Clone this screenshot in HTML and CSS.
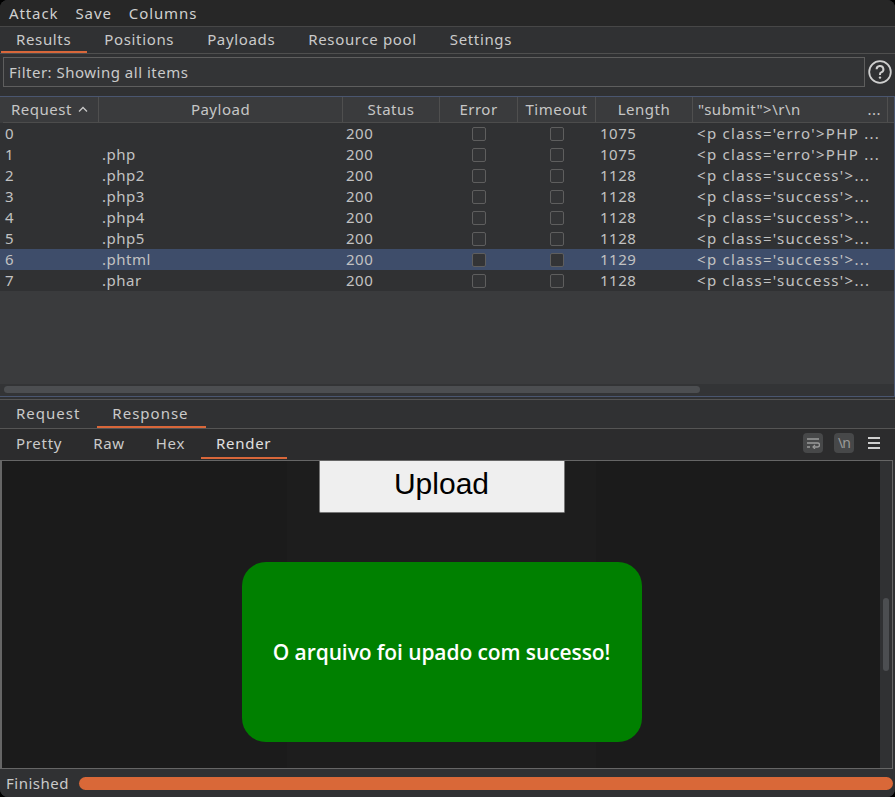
FILE: index.html
```html
<!DOCTYPE html>
<html>
<head>
<meta charset="utf-8">
<link rel="stylesheet" href="styles.css">
</head>
<body>
<div class="window">
  <div class="menubar">
    <span class="menu">Attack</span>
    <span class="menu">Save</span>
    <span class="menu">Columns</span>
  </div>
  <div class="tabs">
    <span class="tab active">Results</span>
    <span class="tab">Positions</span>
    <span class="tab">Payloads</span>
    <span class="tab">Resource pool</span>
    <span class="tab">Settings</span>
  </div>
  <div class="filterrow">
    <div class="filter">Filter: Showing all items</div>
    <svg class="help" width="24" height="24" viewBox="0 0 24 24"><circle cx="12" cy="12" r="10.8" stroke="#cfcfcf" stroke-width="1.8" fill="none"/><path d="M8.6 9.3a3.4 3.3 0 1 1 4.6 3.1c-.9.4-1.2.9-1.2 1.8v.8" stroke="#cfcfcf" stroke-width="2" fill="none"/><circle cx="12" cy="17.6" r="1.2" fill="#cfcfcf"/></svg>
  </div>
  <div class="tablepanel">
    <div class="thead">
      <div class="th c1">Request <svg class="caret" width="10" height="6" viewBox="0 0 10 6"><path d="M1 5.5l4-4 4 4" stroke="#c8c8c8" stroke-width="1.3" fill="none"/></svg></div>
      <div class="th c2">Payload</div>
      <div class="th c3">Status</div>
      <div class="th c4">Error</div>
      <div class="th c5">Timeout</div>
      <div class="th c6">Length</div>
      <div class="th c7 left"><span>"submit"&gt;\r\n</span><span class="dots">...</span></div>
    </div>
    <div class="tbody">
      <div class="tr"><div class="td c1">0</div><div class="td c2"></div><div class="td c3">200</div><div class="td c4"><i class="cb"></i></div><div class="td c5"><i class="cb"></i></div><div class="td c6">1075</div><div class="td c7">&lt;p class='erro'&gt;PHP ...</div></div>
      <div class="tr"><div class="td c1">1</div><div class="td c2">.php</div><div class="td c3">200</div><div class="td c4"><i class="cb"></i></div><div class="td c5"><i class="cb"></i></div><div class="td c6">1075</div><div class="td c7">&lt;p class='erro'&gt;PHP ...</div></div>
      <div class="tr"><div class="td c1">2</div><div class="td c2">.php2</div><div class="td c3">200</div><div class="td c4"><i class="cb"></i></div><div class="td c5"><i class="cb"></i></div><div class="td c6">1128</div><div class="td c7">&lt;p class='success'&gt;...</div></div>
      <div class="tr"><div class="td c1">3</div><div class="td c2">.php3</div><div class="td c3">200</div><div class="td c4"><i class="cb"></i></div><div class="td c5"><i class="cb"></i></div><div class="td c6">1128</div><div class="td c7">&lt;p class='success'&gt;...</div></div>
      <div class="tr"><div class="td c1">4</div><div class="td c2">.php4</div><div class="td c3">200</div><div class="td c4"><i class="cb"></i></div><div class="td c5"><i class="cb"></i></div><div class="td c6">1128</div><div class="td c7">&lt;p class='success'&gt;...</div></div>
      <div class="tr"><div class="td c1">5</div><div class="td c2">.php5</div><div class="td c3">200</div><div class="td c4"><i class="cb"></i></div><div class="td c5"><i class="cb"></i></div><div class="td c6">1128</div><div class="td c7">&lt;p class='success'&gt;...</div></div>
      <div class="tr sel"><div class="td c1">6</div><div class="td c2">.phtml</div><div class="td c3">200</div><div class="td c4"><i class="cb"></i></div><div class="td c5"><i class="cb"></i></div><div class="td c6">1129</div><div class="td c7">&lt;p class='success'&gt;...</div></div>
      <div class="tr"><div class="td c1">7</div><div class="td c2">.phar</div><div class="td c3">200</div><div class="td c4"><i class="cb"></i></div><div class="td c5"><i class="cb"></i></div><div class="td c6">1128</div><div class="td c7">&lt;p class='success'&gt;...</div></div>
    </div>
    <div class="hscroll"><div class="hthumb"></div></div>
  </div>
  <div class="rrtabs">
    <span class="tab2">Request</span>
    <span class="tab2 active">Response</span>
  </div>
  <div class="viewtabs">
    <span class="tab3">Pretty</span>
    <span class="tab3">Raw</span>
    <span class="tab3">Hex</span>
    <span class="tab3 active">Render</span>
    <div class="tools">
      <span class="tbtn"><svg width="14" height="12" viewBox="0 0 14 12"><path d="M1 2h12M1 6h10.5a2 2 0 0 1 0 4H8M1 10h3" stroke="#9a9a9a" stroke-width="1.4" fill="none"/><path d="M9 8l-2 2 2 2" stroke="#9a9a9a" stroke-width="1.2" fill="none"/></svg></span>
      <span class="tbtn nl">\n</span>
      <span class="burger"><i></i><i></i><i></i></span>
    </div>
  </div>
  <div class="render">
    <div class="page">
      <div class="center">
        <div class="upload">Upload</div>
        <div class="msg">O arquivo foi upado com sucesso!</div>
      </div>
    </div>
    <div class="vscroll"><div class="vthumb"></div></div>
  </div>
  <div class="status">
    <span class="fin">Finished</span>
    <div class="progress"></div>
  </div>
</div>
</body>
</html>
```
FILE: styles.css
```css
* { box-sizing: border-box; }
html, body { margin: 0; padding: 0; background: #000; }
body { font-family: "Noto Sans", "Open Sans", sans-serif; font-size: 15px; color: #cacaca; letter-spacing: 0.5px; }
.window {
  width: 895px; height: 797px; background: #303133;
  border-radius: 8px; overflow: hidden;
  display: flex; flex-direction: column;
}
.menubar {
  height: 27px; background: #272727; border-bottom: 1px solid #474747;
  display: flex; align-items: center; padding-left: 9px;
}
.menu { margin-right: 17px; line-height: 26px; color: #d0d0d0; letter-spacing: 0.9px; }
.tabs {
  height: 27px; background: #303133; border-bottom: 1px solid #4f4f4f;
  display: flex; padding-left: 1px;
}
.tab { padding: 0 16px 0 15px; line-height: 24px; height: 26px; border-bottom: 2px solid transparent; letter-spacing: 0.65px; }
.tab + .tab { padding-left: 17px; }
.tab.active { border-bottom-color: #d9673a; }
.filterrow {
  height: 42px; display: flex; align-items: flex-start; padding: 3px 3px 0 3px; gap: 3px;
}
.filter {
  width: 862px; height: 30px; border: 1px solid #5e5e5e; background: #333436;
  padding-left: 5px; line-height: 28px;
}
.help { margin-top: 3px; flex: none; }
.tablepanel {
  height: 301px; border-top: 1px solid #4a5670; border-bottom: 1px solid #4a5670; border-right: 1px solid #4a5670;
  background: #3a3b3d; display: flex; flex-direction: column; padding-left: 3px;
}
.thead { display: flex; height: 26px; background: #3a3b3d; border-bottom: 1px solid #4c4c4c; flex: none; }
.th { border-right: 1px solid #4f4f4f; text-align: center; line-height: 25px; color: #c6c6c6; white-space: nowrap; }
.th.left { text-align: left; display: flex; justify-content: space-between; padding-left: 5px; padding-right: 6px; }
.th.c1 { text-align: left; padding-left: 8px; }
.caret { display: inline-block; vertical-align: 3px; margin-left: 2px; }
.c1 { width: 96px; }
.c2 { width: 244px; }
.c3 { width: 97px; }
.c4 { width: 78px; }
.c5 { width: 78px; }
.c6 { width: 97px; }
.c7 { width: 195px; }
.tbody { background: #3a3b3d; }
.tr { display: flex; height: 21px; background: #303133; margin-left: -3px; padding-left: 3px; }
.tr.sel { background: #3e4d6a; }
.td { line-height: 21px; color: #c2c2c2; white-space: nowrap; overflow: hidden; }
.td.c1 { padding-left: 2px; }
.td.c2 { padding-left: 3px; }
.td.c3 { padding-left: 3px; }
.td.c4, .td.c5 { display: flex; align-items: center; justify-content: center; }
.td.c6 { padding-left: 4px; }
.td.c7 { padding-left: 4px; letter-spacing: 1.3px; }
.cb { display: block; width: 14px; height: 14px; border: 1px solid #5e5e5e; border-radius: 2px; background: #333436; }
.hscroll { margin-top: auto; height: 12px; background: #333436; padding: 2px 4px; margin-left: -3px; }
.hthumb { width: 696px; height: 7px; background: #4c4e51; border-radius: 4px; }
.rrtabs {
  height: 30px; margin-top: 2px; border-top: 1px solid #555; border-bottom: 1px solid #555;
  background: #303133; display: flex; padding-left: 1px; flex: none;
}
.tab2 { padding: 0 17px 0 15px; line-height: 26px; height: 28px; border-bottom: 2px solid transparent; letter-spacing: 1px; }
.tab2.active { border-bottom-color: #d9673a; }
.viewtabs {
  height: 31px; background: #2c2c2d; display: flex; padding-left: 1px; align-items: stretch; flex: none;
}
.tab3 { padding: 0 16px 0 15px; line-height: 29px; height: 30px; border-bottom: 2px solid transparent; letter-spacing: 0.7px; }
.tab3.active { border-bottom-color: #d9673a; color: #e0e0e0; }
.tools { margin-left: auto; display: flex; align-items: center; gap: 11px; padding-right: 15px; padding-bottom: 4px; letter-spacing: 0; }
.tbtn {
  width: 20px; height: 20px; border-radius: 4px; background: #474849;
  display: flex; align-items: center; justify-content: center; color: #9a9a9a; font-size: 13px;
}
.tbtn.nl { font-size: 14px; letter-spacing: -1px; }
.burger { width: 12px; display: flex; flex-direction: column; gap: 3px; margin-left: 3px; }
.burger i { display: block; height: 2px; background: #cfcfcf; }
.render {
  height: 309px; border: 1px solid #666; border-left-width: 2px; background: #1b1b1b;
  display: flex; margin: 0 2px 0 0; flex: none;
}
.page { flex: 1; display: flex; justify-content: center; }
.center { width: 309px; background: #1d1d1d; display: flex; flex-direction: column; align-items: center; margin-left: 1px; }
.upload {
  width: 246px; height: 52px; background: #efefef; border: 1px solid #767676; border-top: none;
  font-family: "Liberation Sans", Arial, sans-serif; font-size: 30px; color: #000; letter-spacing: 0;
  text-align: center; line-height: 46px; border-radius: 0 0 2px 2px; flex: none;
}
.msg {
  margin-top: 49px; width: 400px; height: 180px; background: #008000; border-radius: 24px;
  color: #fff; font-family: "Open Sans", "Noto Sans", sans-serif; font-weight: 600; font-size: 21px;
  display: flex; align-items: center; justify-content: center; letter-spacing: -0.1px; flex: none;
}
.vscroll { width: 12px; background: #303133; padding: 137px 2px 0 3px; }
.vthumb { width: 6px; height: 73px; background: #4c4e51; border-radius: 3px; }
.status { flex: 1; background: #303133; display: flex; align-items: center; padding-left: 6px; }
.fin { margin-right: 10px; }
.progress { flex: 1; height: 13px; background: #d96838; border-radius: 7px; margin-right: 2px; }
```
